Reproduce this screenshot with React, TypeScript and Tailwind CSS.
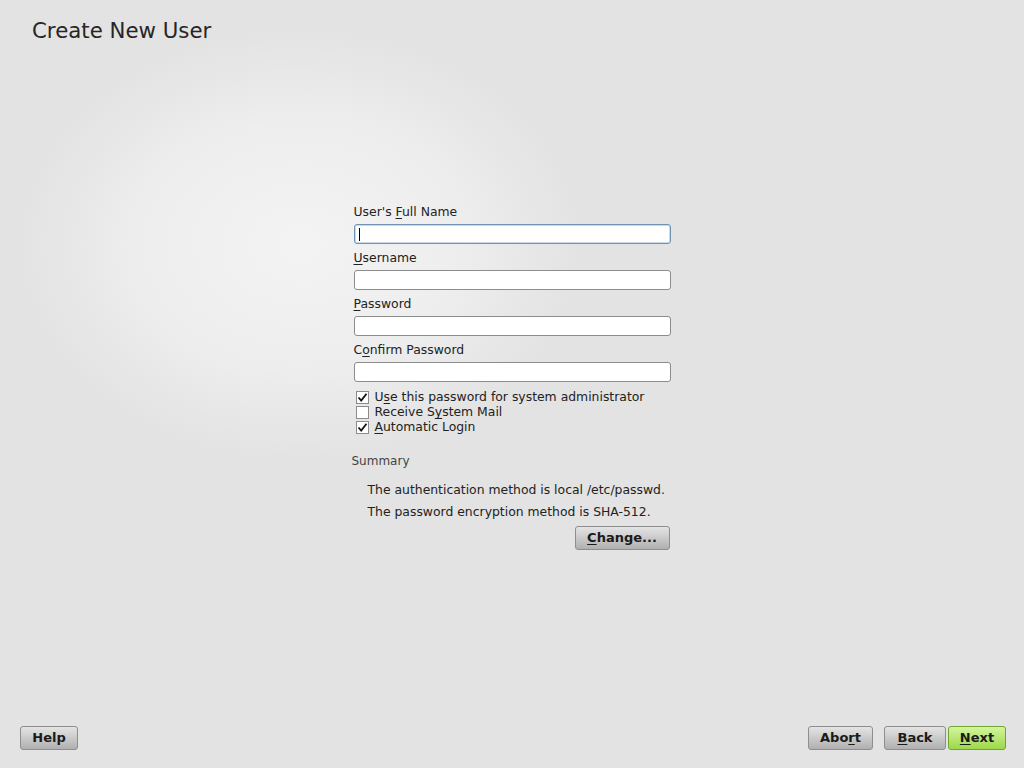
import React from 'react';

const font = { fontFamily: '"DejaVu Sans", Verdana, sans-serif' };

const Mn = ({ children }: { children: React.ReactNode }) => <span className="underline underline-offset-2">{children}</span>;

const Field = ({ label, focused }: { label: React.ReactNode; focused?: boolean }) => (
  <div className="flex flex-col">
    <div className="h-[17px] text-[12.4px] leading-[17px] text-[#222]">{label}</div>
    <div
      className={
        'mt-[4px] h-[20px] w-[317px] rounded-[3px] border bg-white ' +
        (focused ? 'border-[#6f93b3] shadow-[inset_0_0_0_1px_#c9dbea]' : 'border-[#8c8c8c]')
      }
    >
      {focused && <div className="ml-[4px] mt-[3px] h-[13px] w-px bg-black" />}
    </div>
  </div>
);

const Check = ({ checked, children }: { checked?: boolean; children: React.ReactNode }) => (
  <div className="flex h-[15px] items-center">
    <div className="ml-[2px] flex h-[13px] w-[13px] items-center justify-center border border-[#8c8c8c] bg-white">
      {checked && (
        <svg width="11" height="11" viewBox="0 0 11 11">
          <path d="M1.5 5.5 L4.2 8.5 L9.5 1.8" fill="none" stroke="#111" strokeWidth="1.8" />
        </svg>
      )}
    </div>
    <span className="ml-[6px] text-[12.4px] text-[#222]">{children}</span>
  </div>
);

const Btn = ({ children, w, green }: { children: React.ReactNode; w: string; green?: boolean }) => (
  <button
    className={
      'flex h-[24px] items-center justify-center rounded-[3px] border text-[13px] font-bold text-[#1a1a1a] ' +
      w +
      ' ' +
      (green
        ? 'border-[#6ea52c] bg-[linear-gradient(#d4f59c,#9dd84a)]'
        : 'border-[#8e8e8e] bg-[linear-gradient(#e4e4e4,#b0b0b0)]')
    }
  >
    {children}
  </button>
);

export default function App() {
  return (
    <div
      style={font}
      className="relative flex h-[768px] w-[1024px] flex-col overflow-hidden bg-[radial-gradient(ellipse_280px_215px_at_300px_245px,#f3f3f3_0%,#eeeeee_55%,#e3e3e3_100%)]"
    >
      <div className="h-[44px] px-[32px] pt-[17px] text-[21.3px] leading-[28px] text-[#262626]">Create New User</div>

      <div className="flex flex-1 justify-center">
        <div className="mt-[159px] flex w-[317px] flex-col">
          <div className="flex flex-col gap-[5px]">
            <Field label={<>User's <Mn>F</Mn>ull Name</>} focused />
            <Field label={<><Mn>U</Mn>sername</>} />
            <Field label={<><Mn>P</Mn>assword</>} />
            <Field label={<>C<Mn>o</Mn>nfirm Password</>} />
          </div>

          <div className="mt-[8px] flex flex-col">
            <Check checked>U<Mn>s</Mn>e this password for system administrator</Check>
            <Check>Receive S<Mn>y</Mn>stem Mail</Check>
            <Check checked><Mn>A</Mn>utomatic Login</Check>
          </div>

          <div className="ml-[-2px] mt-[18px] text-[12px] leading-[17px] text-[#444]">Summary</div>
          <div className="ml-[14px] mt-[11px] flex flex-col gap-[5px] whitespace-nowrap text-[12.4px] leading-[17px] text-[#222]">
            <div>The authentication method is local /etc/passwd.</div>
            <div>The password encryption method is SHA-512.</div>
          </div>
          <div className="mt-[6px] flex justify-end pr-[1px]">
            <Btn w="w-[95px]"><Mn>C</Mn>hange...</Btn>
          </div>
        </div>
      </div>

      <div className="flex items-center justify-between pb-[18px] pl-[20px] pr-[18px]">
        <Btn w="w-[58px]">Help</Btn>
        <div className="flex gap-[2px]">
          <div className="mr-[9px]">
            <Btn w="w-[65px]">Abo<Mn>r</Mn>t</Btn>
          </div>
          <Btn w="w-[62px]"><Mn>B</Mn>ack</Btn>
          <Btn w="w-[58px]" green><Mn>N</Mn>ext</Btn>
        </div>
      </div>
    </div>
  );
}
